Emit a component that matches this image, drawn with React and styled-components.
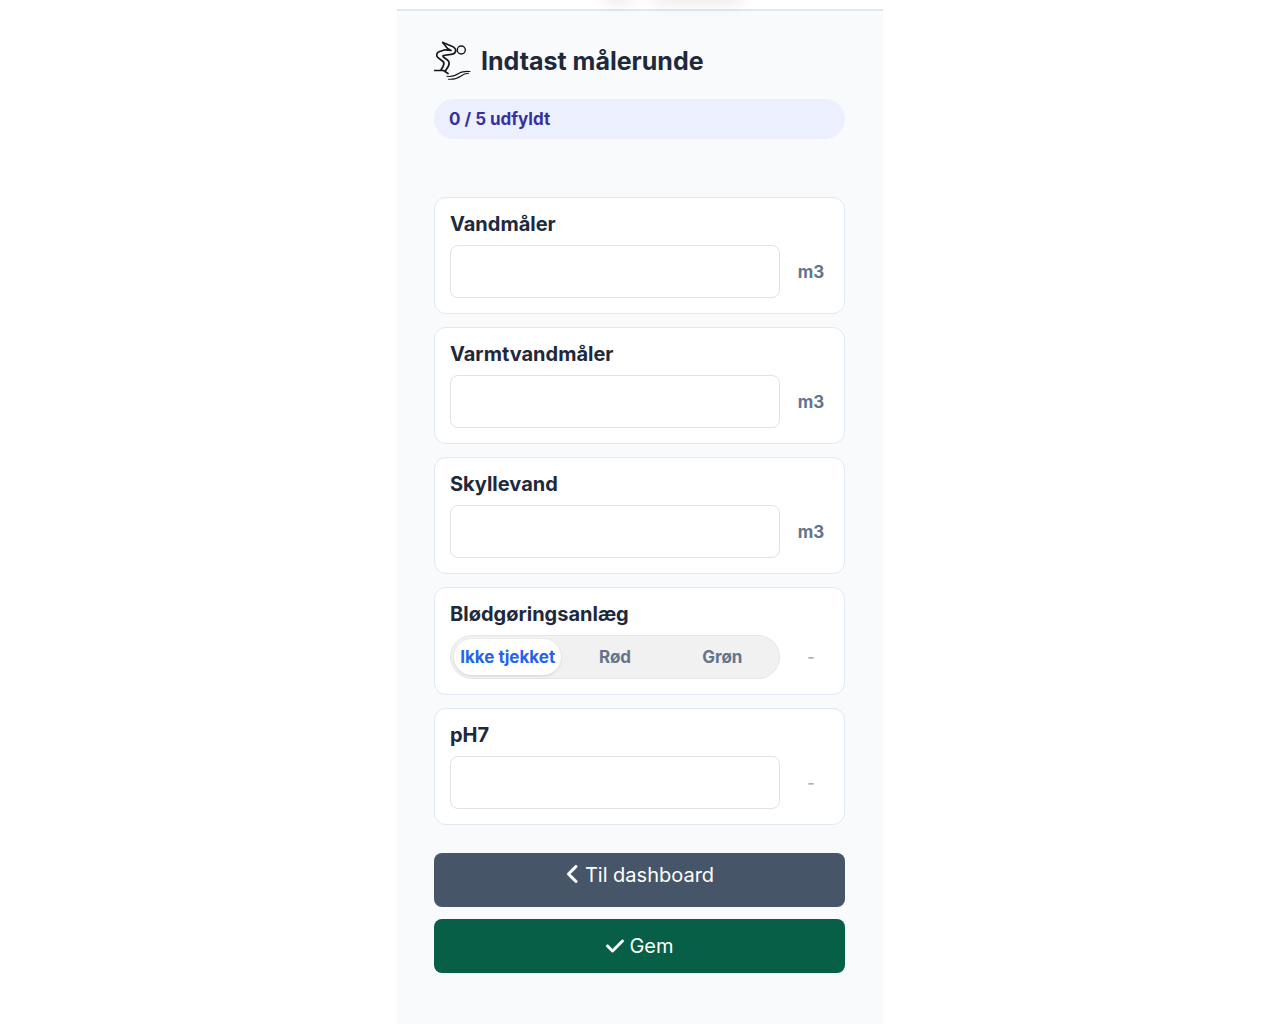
import React, { useState } from 'react'
import styled, { createGlobalStyle } from 'styled-components';
import { FaCheck, FaChevronLeft } from 'react-icons/fa6';

const GlobalStyle = createGlobalStyle`
    * {
        box-sizing: border-box;
    }

    body {
        margin: 0;
        background-color: white;
        color: #1e293b;
        font-family: Inter, sans-serif;
    }
`;

const Root = styled.div`
    position: relative;
    display: flex;
    flex-direction: column;
    max-width: 486px;
    min-height: 100vh;
    margin: 0 auto;
    overflow: hidden;
    background-color: #f8fafc;
`;

const TopBar = styled.header`
    height: 11px;
    background-color: white;
    border-bottom: 2px solid #e2e8f0;
`;

const TopBarShadow = styled.span`
    position: absolute;
    top: -20px;
    left: ${props => props.$left};
    width: ${props => props.$width};
    height: 20px;
    border-radius: 10px;
    box-shadow: 0 4px 16px rgba(0, 0, 0, 0.08);
`;

const Content = styled.main`
    padding: 28px 38px 28px 37px;
`;

const Header = styled.div`
    display: flex;
    align-items: center;
    gap: 10px;
    height: 44px;
`;

const Title = styled.h1`
    margin: 0;
    font-size: 25px;
    line-height: 32px;
    font-weight: 700;
`;

const Progress = styled.div`
    margin: 16px 0 58px;
    padding: 8px 15px;
    border-radius: 20px;
    background-color: #ecf0fe;
    color: #3730a3;
    font-size: 17px;
    line-height: 24px;
    font-weight: 700;
`;

const Form = styled.form`
    display: flex;
    flex-direction: column;
    gap: 13px;
`;

const Card = styled.div`
    padding: 16px 15px 15px;
    border: 1px solid #e2e8f0;
    border-radius: 12px;
    background-color: white;
`;

const CardTitle = styled.label`
    display: block;
    margin-bottom: 11px;
    font-size: 20px;
    line-height: 20px;
    font-weight: 700;
`;

const CardRow = styled.div`
    display: flex;
    align-items: center;
    gap: 13px;
`;

const ReadingInput = styled.input`
    flex: 1;
    min-width: 0;
    height: 53px;
    padding: 0 14px;
    border: 1px solid #e2e2e6;
    border-radius: 8px;
    background-color: white;
    color: inherit;
    font: inherit;
    font-size: 20px;
`;

const Unit = styled.span`
    width: 36px;
    color: ${props => props.$empty ? '#a8b0bb' : '#64748b'};
    font-size: 17px;
    font-weight: ${props => props.$empty ? 500 : 700};
    text-align: center;
`;

const Segments = styled.div`
    display: flex;
    flex: 1;
    height: 44px;
    padding: 3px;
    border: 1px solid #e5e7eb;
    border-radius: 22px;
    background-color: #f1f1f2;
`;

const Segment = styled.label`
    flex: 1 1 0;
    min-width: 0;
    border-radius: 18px;
    color: #64748b;
    font-size: 17px;
    line-height: 36px;
    font-weight: 700;
    text-align: center;
    white-space: nowrap;
    cursor: pointer;

    &:has(input:checked) {
        background-color: white;
        color: #2563eb;
        box-shadow: 0 1px 3px rgba(0, 0, 0, 0.12);
    }

    input {
        position: absolute;
        opacity: 0;
        pointer-events: none;
    }
`;

const Actions = styled.div`
    display: flex;
    flex-direction: column;
    gap: 12px;
    margin-top: 15px;
`;

const BackLink = styled.a`
    display: flex;
    justify-content: center;
    gap: 3px;
    height: 54px;
    padding-top: 10px;
    border-radius: 8px;
    background-color: #475569;
    color: white;
    font-size: 20px;
    line-height: 24px;
    text-decoration: none;

    svg {
        width: 17px;
        margin-top: 1px;
        stroke: currentColor;
        stroke-width: 16;
    }
`;

const SaveButton = styled.button`
    display: flex;
    align-items: center;
    justify-content: center;
    gap: 4px;
    height: 54px;
    border: none;
    border-radius: 8px;
    background-color: #065f46;
    color: white;
    font-family: inherit;
    font-size: 20px;
    cursor: pointer;

    svg {
        stroke: currentColor;
        stroke-width: 12;
    }
`;

const meters = [
    { id: 'vand', name: 'Vandmåler', unit: 'm3' },
    { id: 'varmtvand', name: 'Varmtvandmåler', unit: 'm3' },
    { id: 'skyllevand', name: 'Skyllevand', unit: 'm3' },
    { id: 'bloed', name: 'Blødgøringsanlæg', options: ['Ikke tjekket', 'Rød', 'Grøn'] },
    { id: 'ph7', name: 'pH7' },
];

const DiverLogo = () => (
    <svg width="37" height="44" viewBox="0 0 37 44" fill="none" stroke="#17181c" strokeWidth="1.7" strokeLinecap="round" strokeLinejoin="round" aria-hidden="true">
        <circle cx="27.3" cy="11" r="4" strokeWidth="1.4" />
        <path d="M8.800 3.500L18.500 7.500C21 8.500 22.500 11 21.200 13.200C20.500 14.700 19 15.300 17 15.300L9.500 16.500C8.500 16.800 9 17.600 9.800 18.300L14 21.500C15.800 23.200 15.300 25 14.500 27L11.500 31.800" />
        <path d="M8.800 3.500L13.500 9.500L17 11.500L11 10.800L5 12.700C2.500 13.700 2 16.500 3.700 18.300L9 22.500C10.500 23.800 10 25.500 9.200 27L7 31" />
        <path d="M0.500 31.500H9.500L14 34.500" />
        <path d="M12.800 37.300C19 38 22 36.500 25.500 34C28.500 32 32 32.300 36 32.500M14.500 40.200C20 40.800 23.500 39.500 27 37C29.500 35 32 34.300 34.500 34.200" strokeWidth="1.1" />
    </svg>
);

const MeterItem = ({ meter, value, onChange }) => (
    <Card>
        <CardTitle
            as={meter.options ? 'div' : 'label'}
            id={`${meter.id}-label`}
            htmlFor={meter.options ? undefined : meter.id}
        >
            {meter.name}
        </CardTitle>
        <CardRow>
            {meter.options ? (
                <Segments role="radiogroup" aria-labelledby={`${meter.id}-label`}>
                    {meter.options.map(option => (
                        <Segment key={option}>
                            <input
                                type="radio"
                                name={meter.id}
                                value={option}
                                checked={(value || meter.options[0]) === option}
                                onChange={onChange}
                            />
                            {option}
                        </Segment>
                    ))}
                </Segments>
            ) : (
                <ReadingInput id={meter.id} inputMode="decimal" value={value || ''} onChange={onChange} />
            )}
            <Unit $empty={!meter.unit}>{meter.unit || '-'}</Unit>
        </CardRow>
    </Card>
);

const App = () => {

    const [values, setValues] = useState({});

    const filled = meters.filter(({ id, options }) => values[id] && values[id] !== options?.[0]).length;

    const handleChange = (id) => (event) => {
        setValues({ ...values, [id]: event.target.value });
    }

    const handleSubmit = (event) => {
        event.preventDefault();
    }

    return (
        <>
            <GlobalStyle />
            <Root>
                <TopBar>
                    <TopBarShadow $left="42%" $width="34px" />
                    <TopBarShadow $left="52%" $width="96px" />
                </TopBar>
                <Content>
                    <Header>
                        <DiverLogo />
                        <Title>Indtast målerunde</Title>
                    </Header>
                    <Progress>{filled} / {meters.length} udfyldt</Progress>
                    <Form onSubmit={handleSubmit}>
                        {meters.map(meter => (
                            <MeterItem
                                key={meter.id}
                                meter={meter}
                                value={values[meter.id]}
                                onChange={handleChange(meter.id)}
                            />
                        ))}
                        <Actions>
                            <BackLink href="#dashboard"><FaChevronLeft />Til dashboard</BackLink>
                            <SaveButton type="submit"><FaCheck />Gem</SaveButton>
                        </Actions>
                    </Form>
                </Content>
            </Root>
        </>
    )
}

export default App;
